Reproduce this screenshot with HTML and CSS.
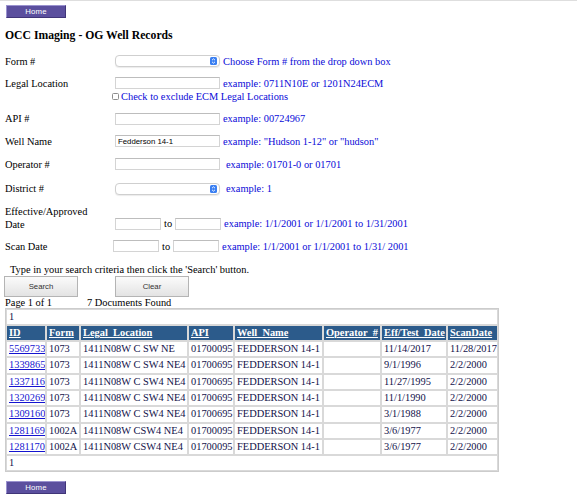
FILE: index.html
```html
<!DOCTYPE html>
<html>
<head>
<meta charset="utf-8">
<title>OCC Imaging - OG Well Records</title>
<link rel="stylesheet" href="styles.css">
</head>
<body>
<div class="page">
  <div class="home-btn home-top">Home</div>
  <h1 class="title">OCC Imaging - OG Well Records</h1>

  <div class="row r-form">
    <span class="label">Form #</span>
    <span class="select"><svg class="sel-icon" width="7" height="8" viewBox="0 0 7 8"><rect x="0" y="0" width="7" height="8" rx="1.6" fill="#3a7ff2"/><path d="M2 3.2 L3.5 1.8 L5 3.2 M2 4.8 L3.5 6.2 L5 4.8" stroke="#fff" stroke-width="0.9" fill="none"/></svg></span>
    <span class="hint">Choose Form # from the drop down box</span>
  </div>

  <div class="row r-legal">
    <span class="label">Legal Location</span>
    <input class="text-in" type="text">
    <span class="hint">example: 0711N10E or 1201N24ECM</span>
  </div>
  <div class="row r-check">
    <span class="checkbox"></span>
    <span class="hint check-text">Check to exclude ECM Legal Locations</span>
  </div>

  <div class="row r-api">
    <span class="label">API #</span>
    <input class="text-in" type="text">
    <span class="hint">example: 00724967</span>
  </div>

  <div class="row r-well">
    <span class="label">Well Name</span>
    <input class="text-in" type="text" value="Fedderson 14-1">
    <span class="hint">example: "Hudson 1-12" or "hudson"</span>
  </div>

  <div class="row r-oper">
    <span class="label">Operator #</span>
    <input class="text-in" type="text">
    <span class="hint hint-wide">example: 01701-0 or 01701</span>
  </div>

  <div class="row r-dist">
    <span class="label">District #</span>
    <span class="select"><svg class="sel-icon" width="7" height="8" viewBox="0 0 7 8"><rect x="0" y="0" width="7" height="8" rx="1.6" fill="#3a7ff2"/><path d="M2 3.2 L3.5 1.8 L5 3.2 M2 4.8 L3.5 6.2 L5 4.8" stroke="#fff" stroke-width="0.9" fill="none"/></svg></span>
    <span class="hint hint-wide">example: 1</span>
  </div>

  <div class="row r-eff">
    <span class="label label-2">Effective/Approved<br>Date</span>
    <span class="date-group">
      <input class="date-in" type="text">
      <span class="to">to</span>
      <input class="date-in" type="text">
      <span class="hint">example: 1/1/2001 or 1/1/2001 to 1/31/2001</span>
    </span>
  </div>

  <div class="row r-scan">
    <span class="label label-narrow">Scan Date</span>
    <input class="date-in" type="text">
    <span class="to">to</span>
    <input class="date-in" type="text">
    <span class="hint">example: 1/1/2001 or 1/1/2001 to 1/31/ 2001</span>
  </div>

  <div class="instructions">Type in your search criteria then click the 'Search' button.</div>
  <div class="buttons">
    <span class="btn">Search</span>
    <span class="btn">Clear</span>
  </div>
  <div class="status">
    <span class="page-count">Page 1 of 1</span>
    <span>7 Documents Found</span>
  </div>

  <table class="results">
    <colgroup>
      <col class="c-id"><col class="c-form"><col class="c-legal"><col class="c-api">
      <col class="c-well"><col class="c-oper"><col class="c-eff"><col class="c-scan">
    </colgroup>
    <tr class="pager"><td colspan="8">1</td></tr>
    <tr class="head">
      <th><a>ID</a></th><th><a>Form</a></th><th><a>Legal_Location</a></th><th><a>API</a></th>
      <th><a>Well_Name</a></th><th><a>Operator_#</a></th><th><a>Eff/Test_Date</a></th><th><a>ScanDate</a></th>
    </tr>
    <tr><td><a class="doc">5569733</a></td><td>1073</td><td>1411N08W C SW NE</td><td>01700095</td><td>FEDDERSON 14-1</td><td></td><td>11/14/2017</td><td>11/28/2017</td></tr>
    <tr><td><a class="doc">1339865</a></td><td>1073</td><td>1411N08W C SW4 NE4</td><td>01700695</td><td>FEDDERSON 14-1</td><td></td><td>9/1/1996</td><td>2/2/2000</td></tr>
    <tr><td><a class="doc">1337116</a></td><td>1073</td><td>1411N08W C SW4 NE4</td><td>01700695</td><td>FEDDERSON 14-1</td><td></td><td>11/27/1995</td><td>2/2/2000</td></tr>
    <tr><td><a class="doc">1320269</a></td><td>1073</td><td>1411N08W C SW4 NE4</td><td>01700695</td><td>FEDDERSON 14-1</td><td></td><td>11/1/1990</td><td>2/2/2000</td></tr>
    <tr><td><a class="doc">1309160</a></td><td>1073</td><td>1411N08W C SW4 NE4</td><td>01700695</td><td>FEDDERSON 14-1</td><td></td><td>3/1/1988</td><td>2/2/2000</td></tr>
    <tr><td><a class="doc">1281169</a></td><td>1002A</td><td>1411N08W CSW4 NE4</td><td>01700095</td><td>FEDDERSON 14-1</td><td></td><td>3/6/1977</td><td>2/2/2000</td></tr>
    <tr><td><a class="doc">1281170</a></td><td>1002A</td><td>1411N08W CSW4 NE4</td><td>01700095</td><td>FEDDERSON 14-1</td><td></td><td>3/6/1977</td><td>2/2/2000</td></tr>
    <tr class="pager"><td colspan="8">1</td></tr>
  </table>

  <div class="home-btn home-bottom">Home</div>
</div>
</body>
</html>
```

FILE: styles.css
```css
html, body {
  margin: 0;
  padding: 0;
  background: #ffffff;
}
body {
  border-top: 1px solid #dedede;
  font-family: "Liberation Serif", "Times New Roman", serif;
  font-size: 10.4px;
  color: #000;
}
.page {
  padding: 0 0 0 5px;
  display: flex;
  flex-direction: column;
  align-items: flex-start;
}

/* Home buttons */
.home-btn {
  box-sizing: border-box;
  width: 60px;
  height: 13px;
  margin-left: 1px;
  background: #5b4f9e;
  border: 1px solid #9a92cf;
  border-right-color: #403578;
  border-bottom-color: #403578;
  color: #ffffff;
  font-family: "Liberation Sans", Arial, sans-serif;
  font-size: 7.8px;
  line-height: 11px;
  text-align: center;
  letter-spacing: 0.2px;
}
.home-top { margin-top: 4px; }
.home-bottom { margin-top: 8.5px; }

.title {
  margin: 11px 0 0 0;
  font-size: 11.7px;
  line-height: 14px;
  font-weight: bold;
}

/* Form rows */
.row {
  display: flex;
  align-items: center;
  height: 12px;
  white-space: nowrap;
}
.label {
  width: 110px;
  flex: none;
}
.label-narrow { width: 108px; }
.label-2 { line-height: 13px; }

.r-form  { margin-top: 12px; }
.r-legal { margin-top: 10px; }
.r-check { margin-top: 1px; height: 13px; padding-left: 107px; }
.r-api   { margin-top: 9.5px; }
.r-well  { margin-top: 10.5px; }
.r-oper  { margin-top: 11px; }
.r-dist  { margin-top: 12.5px; }
.r-eff   { margin-top: 10px; height: 26px; align-items: flex-end; }
.r-scan  { margin-top: 9.5px; }

.hint {
  color: #0a0ad8;
  margin-left: 3px;
}
.hint-wide { margin-left: 6px; }
.check-text { margin-left: 2px; }

.select {
  box-sizing: border-box;
  width: 105px;
  height: 12px;
  border: 1px solid #cfcfcf;
  border-radius: 4px;
  background: #ffffff;
  box-shadow: 0 1px 1px rgba(0,0,0,0.08);
  display: flex;
  align-items: center;
  justify-content: flex-end;
  padding-right: 2px;
}
.sel-icon { display: block; }

.text-in, .date-in {
  box-sizing: border-box;
  height: 12px;
  margin: 0;
  padding: 0 2px;
  border: 1px solid #d4d4d4;
  border-top-color: #bdbdbd;
  background: #ffffff;
  font-family: "Liberation Sans", Arial, sans-serif;
  font-size: 7.8px;
  color: #000;
  outline: none;
}
.text-in { width: 105px; }
.date-in { width: 46px; }

.date-group {
  display: flex;
  align-items: center;
  height: 12px;
  margin-bottom: 1px;
}
.to { margin: 0 3px; }

.checkbox {
  box-sizing: border-box;
  width: 7px;
  height: 7px;
  border: 1px solid #8e8e8e;
  border-radius: 1.5px;
  background: #fff;
}

.instructions {
  margin-top: 11.5px;
  margin-left: 5px;
  height: 12px;
  line-height: 12px;
}

.buttons {
  display: flex;
  gap: 37px;
  margin-left: -1px;
}
.btn {
  box-sizing: border-box;
  width: 74px;
  height: 21px;
  border: 1px solid #b4b4b4;
  background: linear-gradient(#fbfbfb, #e3e3e3);
  color: #333;
  font-family: "Liberation Sans", Arial, sans-serif;
  font-size: 7.8px;
  line-height: 19px;
  text-align: center;
}

.status {
  height: 11px;
  line-height: 11px;
  display: flex;
}
.page-count { width: 82px; }

/* Results table */
.results {
  table-layout: fixed;
  width: 494px;
  border-collapse: separate;
  border-spacing: 0;
  border: 1px solid #cccccc;
  font-size: 10.4px;
  color: #12124a;
}
.c-id { width: 40px; }
.c-form { width: 34px; }
.c-legal { width: 108px; }
.c-api { width: 46px; }
.c-well { width: 89px; }
.c-oper { width: 58px; }
.c-eff { width: 66px; }
.c-scan { width: 51px; }

.results td, .results th {
  border: 1px solid #d9d9d9;
  padding: 1px 1px 1px 2px;
  line-height: 12.3px;
  text-align: left;
  white-space: nowrap;
  overflow: hidden;
}
.results .pager td {
  color: #12124a;
  padding-left: 2px;
}
.results .head th {
  background: #2c5b8b;
  color: #ffffff;
  font-weight: bold;
}
.head a {
  color: #ffffff;
  text-decoration: underline;
}
.doc {
  color: #1414d0;
  text-decoration: underline;
}
```
